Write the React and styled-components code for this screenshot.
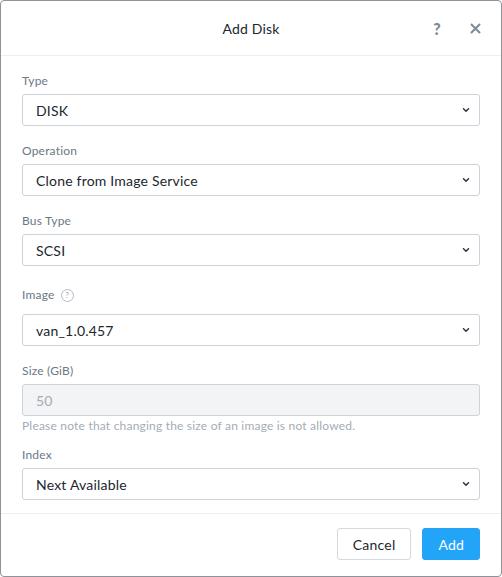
import React from 'react';
import styled, { createGlobalStyle } from 'styled-components';

const Global = createGlobalStyle`
  html, body {
    margin: 0;
    padding: 0;
    background: #ffffff;
  }
  body {
    font-family: Lato, "Open Sans", "Liberation Sans", sans-serif;
    -webkit-font-smoothing: antialiased;
  }
`;

const Dialog = styled.div`
  box-sizing: border-box;
  width: 502px;
  height: 577px;
  border: 1px solid #8e9399;
  border-radius: 4px;
  background: #fff;
  display: flex;
  flex-direction: column;
  overflow: hidden;
`;

const Header = styled.div`
  height: 54px;
  flex: none;
  border-bottom: 1px solid #eceef1;
  display: flex;
  align-items: center;
  justify-content: center;
  position: relative;
`;

const Title = styled.h1`
  margin: 0;
  font-size: 14px;
  font-weight: 400;
  color: #22272e;
  letter-spacing: 0.2px;
`;

const HeaderTools = styled.div`
  position: absolute;
  right: 18px;
  top: 0;
  height: 100%;
  display: flex;
  align-items: center;
  gap: 22px;
`;

const ToolButton = styled.span`
  display: inline-flex;
  align-items: center;
  justify-content: center;
  color: #7d8a99;
  font-size: 16px;
  font-weight: 900;
  cursor: pointer;
  width: 16px;
`;

const Body = styled.div`
  flex: 1;
  padding: 18px 21px 0 21px;
  display: flex;
  flex-direction: column;
`;

const Field = styled.div`
  display: flex;
  flex-direction: column;
  margin-bottom: ${(p) => p.$gap ?? 18}px;
`;

const Label = styled.label`
  display: flex;
  align-items: center;
  gap: 6px;
  font-size: 12px;
  line-height: 14px;
  color: #6b7785;
  letter-spacing: 0.2px;
  margin-top: ${(p) => p.$top ?? 0}px;
  margin-bottom: ${(p) => p.$space ?? 6}px;
`;

const HelpDot = styled.span`
  display: inline-flex;
  align-items: center;
  justify-content: center;
  width: 11px;
  height: 11px;
  border: 1px solid #b4bcc5;
  border-radius: 50%;
  font-size: 8px;
  line-height: 1;
  color: #9aa4af;
`;

const SelectBox = styled.div`
  box-sizing: border-box;
  height: 32px;
  border: 1px solid #cdd3da;
  border-radius: 3px;
  background: ${(p) => (p.$disabled ? '#f2f4f6' : '#fff')};
  display: flex;
  align-items: center;
  justify-content: space-between;
  padding: 0 9px 0 13px;
  font-size: 14px;
  letter-spacing: 0.2px;
  color: ${(p) => (p.$disabled ? '#a3acb6' : '#22272e')};
`;

const Chevron = () => (
  <svg width="8" height="6" viewBox="0 0 8 6">
    <path d="M1.5 1.8 L4 4.2 L6.5 1.8" fill="none" stroke="#2d3540" strokeWidth="1.5" strokeLinecap="round" strokeLinejoin="round" />
  </svg>
);

const Hint = styled.div`
  font-size: 12px;
  color: #a3acb6;
  margin-top: 3px;
  line-height: 14px;
  letter-spacing: 0.2px;
`;

const Footer = styled.div`
  height: 63px;
  flex: none;
  border-top: 1px solid #eceef1;
  display: flex;
  align-items: flex-start;
  justify-content: flex-end;
  gap: 11px;
  padding: 14px 21px 0 0;
  box-sizing: border-box;
`;

const Button = styled.button`
  box-sizing: border-box;
  height: 32px;
  padding: 0 15px;
  border-radius: 3px;
  font-family: inherit;
  font-size: 14px;
  letter-spacing: 0.2px;
  border: 1px solid ${(p) => (p.$primary ? '#22a5f7' : '#d5dae0')};
  background: ${(p) => (p.$primary ? '#22a5f7' : '#fff')};
  color: ${(p) => (p.$primary ? '#fff' : '#22272e')};
  cursor: pointer;
`;

function Select({ value, disabled }) {
  return (
    <SelectBox $disabled={disabled}>
      <span>{value}</span>
      {!disabled && <Chevron />}
    </SelectBox>
  );
}

export default function App() {
  return (
    <>
      <Global />
      <Dialog>
        <Header>
          <Title>Add Disk</Title>
          <HeaderTools>
            <ToolButton>?</ToolButton>
            <ToolButton>
              <svg width="11" height="11" viewBox="0 0 11 11">
                <path d="M1.5 1.5 L9.5 9.5 M9.5 1.5 L1.5 9.5" stroke="#7d8a99" strokeWidth="2" strokeLinecap="round" />
              </svg>
            </ToolButton>
          </HeaderTools>
        </Header>
        <Body>
          <Field>
            <Label>Type</Label>
            <Select value="DISK" />
          </Field>
          <Field>
            <Label>Operation</Label>
            <Select value="Clone from Image Service" />
          </Field>
          <Field>
            <Label>Bus Type</Label>
            <Select value="SCSI" />
          </Field>
          <Field>
            <Label $top={4} $space={12}>
              Image <HelpDot>?</HelpDot>
            </Label>
            <Select value="van_1.0.457" />
          </Field>
          <Field $gap={15}>
            <Label>Size (GiB)</Label>
            <Select value="50" disabled />
            <Hint>Please note that changing the size of an image is not allowed.</Hint>
          </Field>
          <Field $gap={0}>
            <Label>Index</Label>
            <Select value="Next Available" />
          </Field>
        </Body>
        <Footer>
          <Button>Cancel</Button>
          <Button $primary>Add</Button>
        </Footer>
      </Dialog>
    </>
  );
}
